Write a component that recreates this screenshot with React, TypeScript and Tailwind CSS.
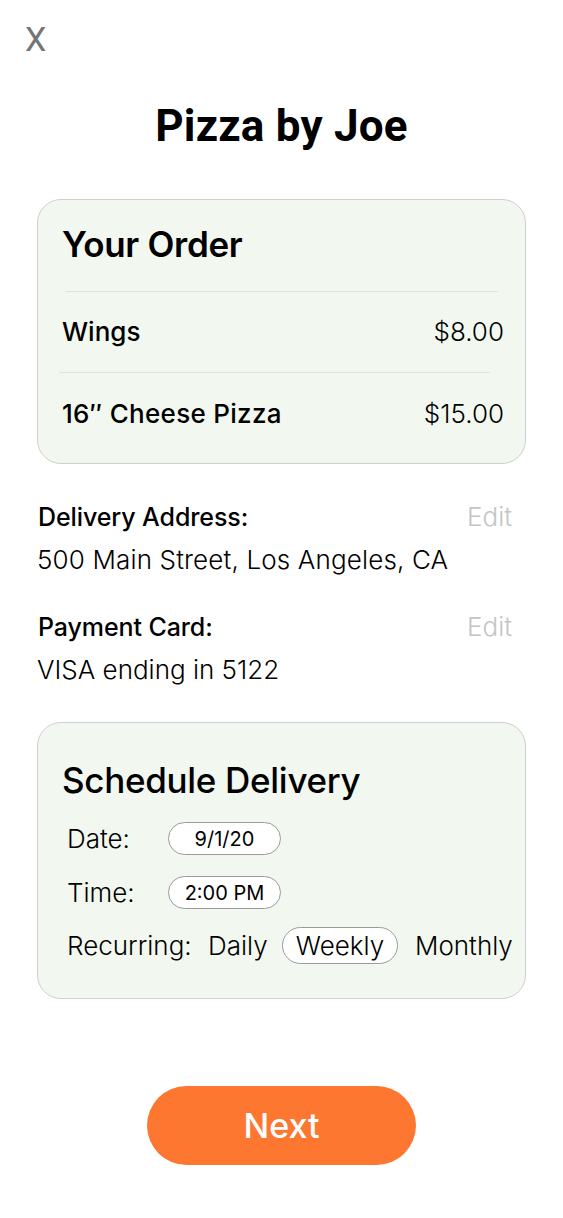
export default function App() {
  return (
    <div className="min-h-screen w-full bg-white text-black font-['Inter',sans-serif] relative">
      <button className="absolute left-[25px] top-[22px] text-[34px] leading-none font-normal text-[#757575] font-['Roboto',sans-serif]">
        X
      </button>

      <div className="pt-[100px] px-[37px] flex flex-col">
        <h1 className="text-center text-[44px] leading-[52px] font-bold font-['Roboto',sans-serif] tracking-[0.2px]">
          Pizza by Joe
        </h1>

        {/* Order card */}
        <div className="mt-[47px] h-[265px] rounded-[24px] border border-[#cfcfcf] bg-[#f2f7ef] pl-[24px] pr-[21px] pt-[22px]">
          <h2 className="text-[35px] leading-[44px] font-semibold tracking-[-0.3px]">Your Order</h2>
          <div className="mt-[25px] ml-[4px] mr-[6px] h-px bg-[#dfe3dc]" />
          <div className="flex justify-between items-center h-[80px] pb-[2px] text-[26px]">
            <span className="font-medium">Wings</span>
            <span className="font-light">$8.00</span>
          </div>
          <div className="-ml-[3px] mr-[14px] h-px bg-[#dfe3dc]" />
          <div className="flex justify-between items-center h-[80px] text-[26px]">
            <span className="font-medium tracking-[0.3px]">16″ Cheese Pizza</span>
            <span className="font-light">$15.00</span>
          </div>
        </div>

        {/* Delivery Address */}
        <div className="mt-[36px] flex justify-between items-end px-[1px]">
          <span className="text-[25px] leading-[34px] font-medium tracking-[-0.1px]">Delivery Address:</span>
          <span className="text-[26px] leading-[34px] text-[#c4c4c4] mr-[13px] font-light">Edit</span>
        </div>
        <div className="mt-[9px] text-[26px] leading-[34px] font-light tracking-[0.15px]">500 Main Street, Los Angeles, CA</div>

        <div className="mt-[33px] flex justify-between items-end px-[1px]">
          <span className="text-[25px] leading-[34px] font-medium tracking-[-0.1px]">Payment Card:</span>
          <span className="text-[26px] leading-[34px] text-[#c4c4c4] mr-[13px] font-light">Edit</span>
        </div>
        <div className="mt-[9px] text-[26px] leading-[34px] font-light">VISA ending in 5122</div>

        {/* Schedule card */}
        <div className="mt-[35px] h-[277px] rounded-[24px] border border-[#cfcfcf] bg-[#f2f7ef] pl-[24px] pt-[35px]">
          <h2 className="text-[35px] leading-[44px] font-medium tracking-[-0.3px]">Schedule Delivery</h2>
          <div className="mt-[20px] ml-[5px] flex items-center h-[33px]">
            <span className="w-[101px] text-[26px] font-light">Date:</span>
            <span className="w-[113px] h-[33px] rounded-full border border-[#9a9a9a] bg-white flex items-center justify-center text-[20px] font-normal">
              9/1/20
            </span>
          </div>
          <div className="mt-[21px] ml-[5px] flex items-center h-[33px]">
            <span className="w-[101px] text-[26px] font-light">Time:</span>
            <span className="w-[113px] h-[33px] rounded-full border border-[#9a9a9a] bg-white flex items-center justify-center text-[20px] font-normal">
              2:00 PM
            </span>
          </div>
          <div className="mt-[18px] ml-[5px] flex items-center h-[37px] text-[26px] font-light">
            <span className="w-[141px]">Recurring:</span>
            <span className="w-[74px]">Daily</span>
            <span className="w-[116px] h-[37px] rounded-full border border-[#9a9a9a] bg-white flex items-center justify-center">
              Weekly
            </span>
            <span className="ml-[17px]">Monthly</span>
          </div>
        </div>

        <div className="mt-[87px] flex justify-center">
          <button className="w-[269px] h-[79px] rounded-full bg-[#fe7730] text-white text-[34px] font-medium">
            Next
          </button>
        </div>
      </div>
    </div>
  );
}
